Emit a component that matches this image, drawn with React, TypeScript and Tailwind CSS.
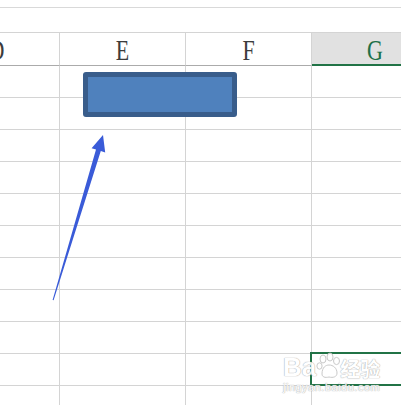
import React from 'react';

const cols = ['D', 'E', 'F', 'G'];
const rows = Array.from({ length: 11 });

const Paw = () => (
  <svg width="26" height="28" viewBox="0 0 26 28" className="-mt-[8px]">
    <g fill="#ffffff" stroke="#c4c4c4" strokeWidth="1">
      <ellipse cx="7" cy="7" rx="3" ry="4" />
      <ellipse cx="14" cy="5" rx="3" ry="4" />
      <ellipse cx="20.5" cy="9" rx="3" ry="3.6" />
      <ellipse cx="3.5" cy="14" rx="2.6" ry="3.2" />
      <path d="M6 22 C6 15 10 13 13 13 C17 13 21 16 21 21 C21 25 17 26 13 25 C9 26 6 25 6 22 Z" />
    </g>
  </svg>
);

export default function App() {
  return (
    <div className="relative w-[401px] h-[405px] overflow-hidden bg-white font-['Liberation_Serif',serif]">
      {/* formula bar area */}
      <div className="h-[7px]" />
      <div className="h-[25px] border-t border-[#d9d9d9]" />

      {/* sheet */}
      <div className="relative">
        <div className="ml-[-66px] w-[504px]">
          {/* column header */}
          <div className="grid grid-cols-[126px_126px_126px_126px] h-[34px] border-t border-[#d4d4d4]">
            {cols.map((c) => (
              <div
                key={c}
                className={
                  c === 'G'
                    ? 'flex items-center justify-center bg-[#e1e1e1] border-b-2 border-[#217346] text-[#1d7048]'
                    : 'flex items-center justify-center border-r border-[#d4d4d4] border-b border-b-[#ababab] text-[#3c3c3c]'
                }
              >
                <span className="text-[22px] leading-none scale-y-[1.32] translate-y-[2px]">{c}</span>
              </div>
            ))}
          </div>

          {/* cells */}
          {rows.map((_, i) => (
            <div key={i} className="grid grid-cols-[126px_126px_126px_126px] h-[32px]">
              {cols.map((c) => (
                <div key={c} className="border-r border-b border-[#d4d4d4]" />
              ))}
            </div>
          ))}
        </div>

        {/* selected cell */}
        <div className="absolute left-[310px] top-[320px] w-[100px] h-[34px] border-2 border-[#217346]" />

        {/* watermark */}
        <div className="absolute left-[283px] top-[322px] flex flex-col items-start text-white [text-shadow:0_0_1px_#a8a8a8,0_0_1px_#a8a8a8] opacity-90">
          <div className="flex items-end text-[26px] font-bold leading-none font-['Liberation_Sans','Noto_Sans_CJK_SC',sans-serif]">
            <span>Ba</span>
            <Paw />
            <span className="text-[20px] -ml-[2px]">经验</span>
          </div>
          <span className="text-[11px] leading-none mt-[2px] tracking-[0.5px] font-['Liberation_Sans',sans-serif]">jingyan.baidu.com</span>
        </div>
      </div>

      {/* rectangle shape */}
      <div className="absolute left-[83px] top-[72px] w-[154px] h-[45px] rounded-[3px] border-[5px] border-[#395d8b] bg-[#4f81bd]" />

      {/* arrow */}
      <svg className="absolute left-0 top-0" width="401" height="405" viewBox="0 0 401 405">
        <path
          d="M103 135 L105.2 152.4 L100.8 151 L53.6 300.3 L52.6 300 L96 149.6 L91.6 148.2 Z"
          fill="#3a5bd8"
        />
      </svg>
    </div>
  );
}
